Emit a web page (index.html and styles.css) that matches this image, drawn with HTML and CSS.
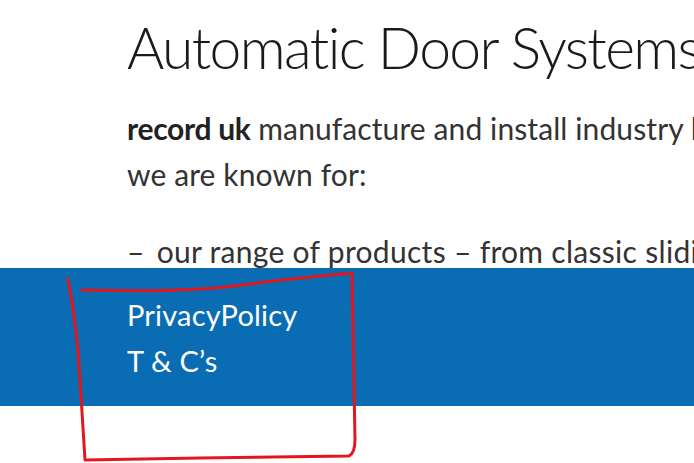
FILE: index.html
```html
<!DOCTYPE html>
<html lang="en">
<head>
  <meta charset="UTF-8">
  <meta name="viewport" content="width=device-width, initial-scale=1.0">
  <title>Automatic Door Systems</title>
  <link rel="stylesheet" href="styles.css">
</head>
<body>
  <div class="page">
    <!-- Intro -->
    <div class="content">
      <h1>Automatic Door Systems and Entrances</h1>
      <p class="intro"><strong>record uk</strong> manufacture and install industry leading automatic doors, and<br>
        we are known for:</p>
      <ul class="known-for">
        <li>our range of products – from classic sliding doors to revolving doors</li>
      </ul>
    </div>

    <!-- Footer links -->
    <footer class="footer">
      <a href="#" class="footer-link">PrivacyPolicy</a>
      <a href="#" class="footer-link">T &amp; C’s</a>
    </footer>

    <!-- Review mark -->
    <svg class="markup" xmlns="http://www.w3.org/2000/svg" viewBox="0 0 694 463">
      <path d="M68,279 C72,300 78,340 80,380 L85,460 L200,458 L349,456 C353,454 355,448 355,440 L352,273 C320,276 280,280 250,284 C210,290 150,292 82,290"></path>
    </svg>
  </div>
</body>
</html>
```

FILE: styles.css
```css
body {
  font-family: Lato, "Liberation Sans", sans-serif;
  font-variant-ligatures: none;
  margin: 0;
  padding: 0;
  background: #fff;
  color: #333;
  overflow: hidden;
}
.page {
  position: relative;
  width: 694px;
  height: 463px;
}
.content {
  height: 268px;
  padding: 0 0 0 127px;
  white-space: nowrap;
}
h1 {
  margin: 0;
  padding-top: 12px;
  font-size: 57px;
  font-weight: 300;
  letter-spacing: -1.6px;
  line-height: 70px;
  color: #1a1a1a;
}
.intro {
  margin: 23px 0 0;
  font-size: 30px;
  letter-spacing: 0.1px;
  line-height: 46px;
}
.intro strong {
  font-weight: 700;
  letter-spacing: -0.3px;
  color: #222;
}
.known-for {
  list-style: none;
  margin: 31px 0 0;
  padding: 0;
  font-size: 30px;
  letter-spacing: 0.3px;
  line-height: 46px;
}
.known-for li::before {
  content: "–";
  margin-right: 12px;
}
.footer {
  background: #0a6db4;
  height: 138px;
  padding: 24px 0 0 127px;
  box-sizing: border-box;
  display: flex;
  flex-direction: column;
}
.footer-link {
  color: #fff;
  text-decoration: none;
  font-size: 29px;
  letter-spacing: 0.2px;
  line-height: 46px;
}
.markup {
  position: absolute;
  top: 0;
  left: 0;
  width: 694px;
  height: 463px;
  pointer-events: none;
}
.markup path {
  fill: none;
  stroke: #e3161c;
  stroke-width: 3;
  stroke-linecap: round;
  stroke-linejoin: round;
}
```
